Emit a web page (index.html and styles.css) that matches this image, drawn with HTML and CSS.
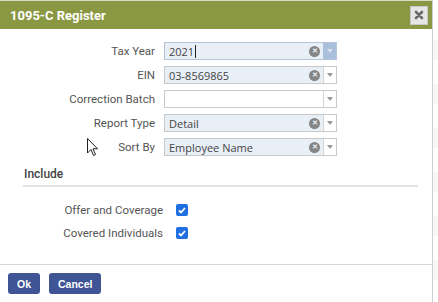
FILE: index.html
```html
<!DOCTYPE html>
<html lang="en">
<head>
  <meta charset="UTF-8">
  <title>1095-C Register</title>
  <link rel="stylesheet" href="styles.css">
</head>
<body>
  <div class="page">
    <div class="dialog">
      <div class="titlebar">
        <span class="title">1095-C Register</span>
        <span class="close">
          <svg width="10" height="10" viewBox="0 0 10 10"><path d="M2 2L8 8M8 2L2 8" stroke="#6a6a6a" stroke-width="2.6" stroke-linecap="round"/></svg>
        </span>
      </div>

      <div class="body">
        <div class="form">
          <label>Tax Year</label>
          <div class="combo focus">
            <span class="value">2021<span class="caret"></span></span>
            <span class="clear">&#x2715;</span>
            <span class="arrow"><i></i></span>
          </div>

          <label>EIN</label>
          <div class="combo">
            <span class="value">03-8569865</span>
            <span class="clear">&#x2715;</span>
            <span class="arrow"><i></i></span>
          </div>

          <label>Correction Batch</label>
          <div class="combo empty">
            <span class="value"></span>
            <span class="arrow"><i></i></span>
          </div>

          <label>Report Type</label>
          <div class="combo">
            <span class="value">Detail</span>
            <span class="clear">&#x2715;</span>
            <span class="arrow"><i></i></span>
          </div>

          <label>Sort By</label>
          <div class="combo">
            <span class="value">Employee Name</span>
            <span class="clear">&#x2715;</span>
            <span class="arrow"><i></i></span>
          </div>
        </div>

        <h3 class="section">Include</h3>

        <div class="checks">
          <label>Offer and Coverage</label>
          <span class="check"><svg width="8" height="7" viewBox="0 0 8 7"><path d="M1 3.5L3 5.5L7 1" fill="none" stroke="#fff" stroke-width="1.8"/></svg></span>
          <label>Covered Individuals</label>
          <span class="check"><svg width="8" height="7" viewBox="0 0 8 7"><path d="M1 3.5L3 5.5L7 1" fill="none" stroke="#fff" stroke-width="1.8"/></svg></span>
        </div>
      </div>

      <div class="footer">
        <button class="btn">Ok</button>
        <button class="btn">Cancel</button>
      </div>
    </div>
    <div class="backdrop">
      <div class="band"></div>
      <div class="band"></div>
      <div class="band"></div>
      <div class="band"></div>
      <div class="band"></div>
      <div class="band"></div>
    </div>
  </div>

  <svg class="cursor" width="12" height="19" viewBox="0 0 12 19"><path d="M0.5 0.5L0.5 15L4 11.5L6.5 17.5L8.5 16.5L6 10.8L10.5 10.8Z" fill="#fff" stroke="#222" stroke-width="1"/></svg>
</body>
</html>
```

FILE: styles.css
```css
body {
  margin: 0;
  font-family: Roboto, "Liberation Sans", sans-serif;
  color: #555;
  background: #fff;
  width: 438px;
  height: 302px;
  overflow: hidden;
  position: relative;
}

.page {
  display: flex;
  height: 302px;
}

.dialog {
  width: 432px;
  border-right: 1px solid #cfcfcf;
  display: flex;
  flex-direction: column;
  background: #fff;
}

.backdrop {
  flex: 1;
  padding-top: 40px;
  display: flex;
  flex-direction: column;
  gap: 24px;
}

.band {
  height: 20px;
  background: #f7f7f7;
}

.titlebar {
  height: 28px;
  border-top: 1px solid #d8dcc4;
  background: #8b9843;
  display: flex;
  align-items: center;
  justify-content: space-between;
  padding: 0 4px 0 10px;
}

.title {
  color: #fff;
  font-weight: bold;
  font-size: 13px;
}

.close {
  width: 16px;
  height: 17px;
  background: #e6e6e6;
  border: 1px solid #c8c8c8;
  display: flex;
  align-items: center;
  justify-content: center;
}

.body {
  flex: 1;
  padding: 13px 0 0 0;
}

.form {
  display: grid;
  grid-template-columns: 155px 173px;
  column-gap: 9px;
  row-gap: 6px;
  align-items: center;
}

.form label {
  text-align: right;
  font-size: 11.5px;
  color: #555;
}

.combo {
  height: 18px;
  box-sizing: border-box;
  border: 1px solid #c9c9c9;
  background: #e9eff7;
  display: flex;
  align-items: center;
}

.combo.empty {
  background: #fff;
}

.combo .value {
  flex: 1;
  padding-left: 4px;
  font-family: "Open Sans", sans-serif;
  font-size: 11px;
  color: #444;
  display: flex;
  align-items: center;
}

.caret {
  display: inline-block;
  width: 1px;
  height: 13px;
  background: #222;
  margin-left: 1px;
}

.clear {
  width: 11px;
  height: 11px;
  border-radius: 50%;
  background: #858585;
  color: #e9eff7;
  font-size: 7px;
  font-weight: bold;
  line-height: 11px;
  text-align: center;
  margin-right: 3px;
}

.arrow {
  width: 12px;
  height: 16px;
  border-left: 1px solid #d4d4d4;
  background: #fff;
  display: flex;
  align-items: center;
  justify-content: center;
}

.arrow i {
  width: 0;
  height: 0;
  border-left: 3px solid transparent;
  border-right: 3px solid transparent;
  border-top: 4px solid #999;
}

.combo.focus {
  border-color: #b3c4dc;
}

.combo.focus .arrow {
  background: #a9bfdc;
  border-left-color: #a9bfdc;
}

.combo.focus .arrow i {
  border-top-color: #d8e2ef;
}

.section {
  margin: 11px 14px 0 23px;
  padding: 0 0 4px 1px;
  border-bottom: 2px solid #e2e2e2;
  font-size: 12px;
  font-weight: 500;
  color: #444;
}

.checks {
  display: grid;
  grid-template-columns: 163px 12px;
  column-gap: 13px;
  row-gap: 9px;
  align-items: center;
  margin-top: 16px;
}

.checks label {
  text-align: right;
  font-size: 11.5px;
}

.check {
  width: 12px;
  height: 12px;
  border-radius: 2px;
  background: #1f6fe0;
  display: flex;
  align-items: center;
  justify-content: center;
}

.footer {
  border-top: 1px solid #d5d5d5;
  height: 38px;
  display: flex;
  gap: 9px;
  padding: 8px 0 0 8px;
  box-sizing: border-box;
}

.btn {
  height: 21px;
  padding: 0 9px;
  border: none;
  border-radius: 3px;
  background: #3f5494;
  color: #fff;
  font-family: "Liberation Sans", Arial, sans-serif;
  font-weight: bold;
  font-size: 10.5px;
}

.cursor {
  position: absolute;
  left: 87px;
  top: 138px;
}
```
